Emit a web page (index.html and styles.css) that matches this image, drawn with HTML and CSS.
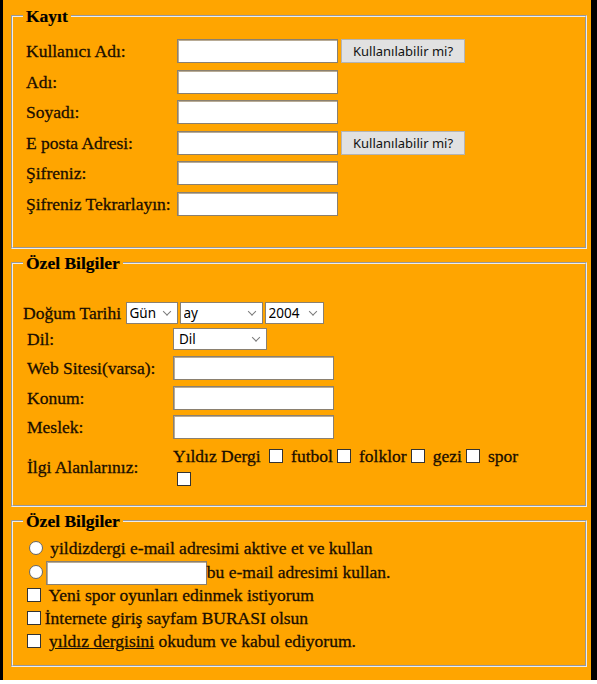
FILE: index.html
```html
<!DOCTYPE html>
<html lang="tr">
<head>
<meta charset="utf-8">
<title>Kayıt</title>
<link rel="stylesheet" href="styles.css">
</head>
<body>
<div class="page">
  <fieldset class="fs fs-kayit">
    <legend>Kayıt</legend>
    <div class="reg-grid">
      <label class="lbl">Kullanıcı Adı:</label><input class="txt" type="text"><button class="btn" type="button">Kullanılabilir mi?</button>
      <label class="lbl">Adı:</label><input class="txt" type="text"><span></span>
      <label class="lbl">Soyadı:</label><input class="txt" type="text"><span></span>
      <label class="lbl">E posta Adresi:</label><input class="txt" type="text"><button class="btn" type="button">Kullanılabilir mi?</button>
      <label class="lbl">Şifreniz:</label><input class="txt" type="password"><span></span>
      <label class="lbl">Şifreniz Tekrarlayın:</label><input class="txt" type="password"><span></span>
    </div>
  </fieldset>

  <fieldset class="fs fs-ozel">
    <legend>Özel Bilgiler</legend>
    <div class="dob">
      <span class="dob-lbl">Doğum Tarihi</span>
      <span class="sel w-gun"><select><option>Gün</option></select></span>
      <span class="sel w-ay"><select><option>ay</option></select></span>
      <span class="sel w-yil"><select><option>2004</option></select></span>
    </div>
    <div class="info-grid">
      <label class="lbl">Dil:</label><span class="sel w-dil"><select><option>Dil</option></select></span>
      <label class="lbl">Web Sitesi(varsa):</label><input class="txt" type="text">
      <label class="lbl">Konum:</label><input class="txt" type="text">
      <label class="lbl">Meslek:</label><input class="txt" type="text">
      <label class="lbl lbl-ilgi">İlgi Alanlarınız:</label>
      <div class="ilgi">Yıldız Dergi <input class="cb" type="checkbox"> futbol<input class="cb" type="checkbox"> folklor<input class="cb" type="checkbox"> gezi<input class="cb" type="checkbox"> spor<input class="cb" type="checkbox"></div>
    </div>
  </fieldset>

  <fieldset class="fs fs-mail">
    <legend>Özel Bilgiler</legend>
    <div class="line"><input class="rd" type="radio" name="m"> yildizdergi e-mail adresimi aktive et ve kullan</div>
    <div class="line line-tall"><input class="rd" type="radio" name="m"><input class="txt" type="text">bu e-mail adresimi kullan.</div>
    <div class="line"><input class="cb" type="checkbox"> Yeni spor oyunları edinmek istiyorum</div>
    <div class="line"><input class="cb" type="checkbox">İnternete giriş sayfam BURASI olsun</div>
    <div class="line"><input class="cb" type="checkbox"> <a class="link" href="#">yıldız dergisini</a> okudum ve kabul ediyorum.</div>
  </fieldset>
</div>
</body>
</html>
```
FILE: styles.css
```css
html, body {
  margin: 0;
  padding: 0;
  background: #ffffff;
}

.page {
  box-sizing: border-box;
  width: 597px;
  height: 680px;
  background: #ffa500;
  border-left: 3px solid #000;
  border-right: 6px solid #000;
  padding: 6px 2px 0 6px;
  font-family: "Liberation Serif", "Times New Roman", serif;
  font-size: 17.5px;
  color: #1a0e00;
  -webkit-text-stroke: 0.3px #1a0e00;
}

.fs {
  margin: 0 2px 4px 2px;
  border: 2px groove #ececec;
  padding: 0 10px;
  min-width: 0;
}

.fs legend {
  padding: 0 3px;
  margin: 0;
  font-weight: bold;
  line-height: 20px;
  height: 20px;
  color: #000;
  -webkit-text-stroke: 0.2px #000;
}

.fs-kayit {
  padding-top: 13px;
  padding-bottom: 31.5px;
}

.fs-ozel {
  padding-top: 28.5px;
  padding-bottom: 13.8px;
}

.fs-mail {
  padding-top: 6.3px;
  padding-bottom: 11.7px;
}

.lbl {
  align-self: center;
  line-height: 20px;
  white-space: nowrap;
}

.lbl-ilgi {
  margin-top: -3px;
}

.txt {
  box-sizing: border-box;
  width: 161px;
  height: 24px;
  margin: 0;
  padding: 1px 3px;
  border: 1px solid #8a8070;
  box-shadow: inset 1px 1px 0 #b8ab95;
  background: #fff;
  font-family: "Noto Sans", sans-serif;
  font-size: 13.5px;
  vertical-align: baseline;
  -webkit-text-stroke: 0;
}

.reg-grid {
  display: grid;
  grid-template-columns: 151px 161px auto;
  grid-auto-rows: 24px;
  row-gap: 6.5px;
  margin-left: 3px;
  justify-items: start;
}

.btn {
  box-sizing: border-box;
  width: 124px;
  height: 24px;
  margin: 0 0 0 3px;
  padding: 0;
  background: #e1e1e1;
  border: 1px solid #b4b4b4;
  font-family: "Noto Sans", sans-serif;
  font-size: 13px;
  color: #111;
  -webkit-text-stroke: 0;
}

.dob {
  display: flex;
  align-items: center;
  height: 22px;
  gap: 2px;
}

.dob-lbl {
  margin-right: 2.4px;
  line-height: 20px;
  white-space: nowrap;
}

.sel {
  position: relative;
  display: inline-block;
  height: 22px;
  -webkit-text-stroke: 0;
}

.sel::after {
  content: "";
  position: absolute;
  right: 8px;
  top: 50%;
  width: 5px;
  height: 5px;
  border-right: 1px solid #7a7a7a;
  border-bottom: 1px solid #7a7a7a;
  transform: translateY(-75%) rotate(45deg);
  pointer-events: none;
}

.sel select {
  -webkit-appearance: none;
  appearance: none;
  box-sizing: border-box;
  width: 100%;
  height: 22px;
  margin: 0;
  padding: 0 0 0 3px;
  border: 1px solid #8a8070;
  border-radius: 0;
  background: #fff;
  font-family: "Noto Sans", sans-serif;
  font-size: 13.5px;
  color: #000;
}

.w-gun { width: 52px; }
.w-ay { width: 83px; }
.w-yil { width: 59px; }
.w-dil { width: 94px; }
.w-dil select { padding-left: 5px; }

.info-grid {
  display: grid;
  grid-template-columns: 146px 355px;
  grid-template-rows: 22px 24px 24px 24px auto;
  row-gap: 5.8px;
  margin-top: 4.5px;
  margin-left: 4px;
  justify-items: start;
}

.ilgi {
  width: 355px;
  line-height: 23px;
}

.cb {
  -webkit-appearance: none;
  appearance: none;
  box-sizing: border-box;
  width: 14px;
  height: 14px;
  margin: 0 3.3px 0 4.4px;
  border: 1.5px solid #333;
  background: #fff;
  vertical-align: -1px;
}

.rd {
  -webkit-appearance: none;
  appearance: none;
  box-sizing: border-box;
  width: 14px;
  height: 14px;
  margin: 0 3.3px 0 5.5px;
  border: 1.5px solid #666;
  border-radius: 50%;
  background: #fff;
  vertical-align: -1px;
}

.line {
  height: 23px;
  line-height: 23px;
  white-space: nowrap;
}

.line-tall {
  height: 24px;
  line-height: 24px;
}

.link {
  color: inherit;
  text-decoration: underline;
}
```
